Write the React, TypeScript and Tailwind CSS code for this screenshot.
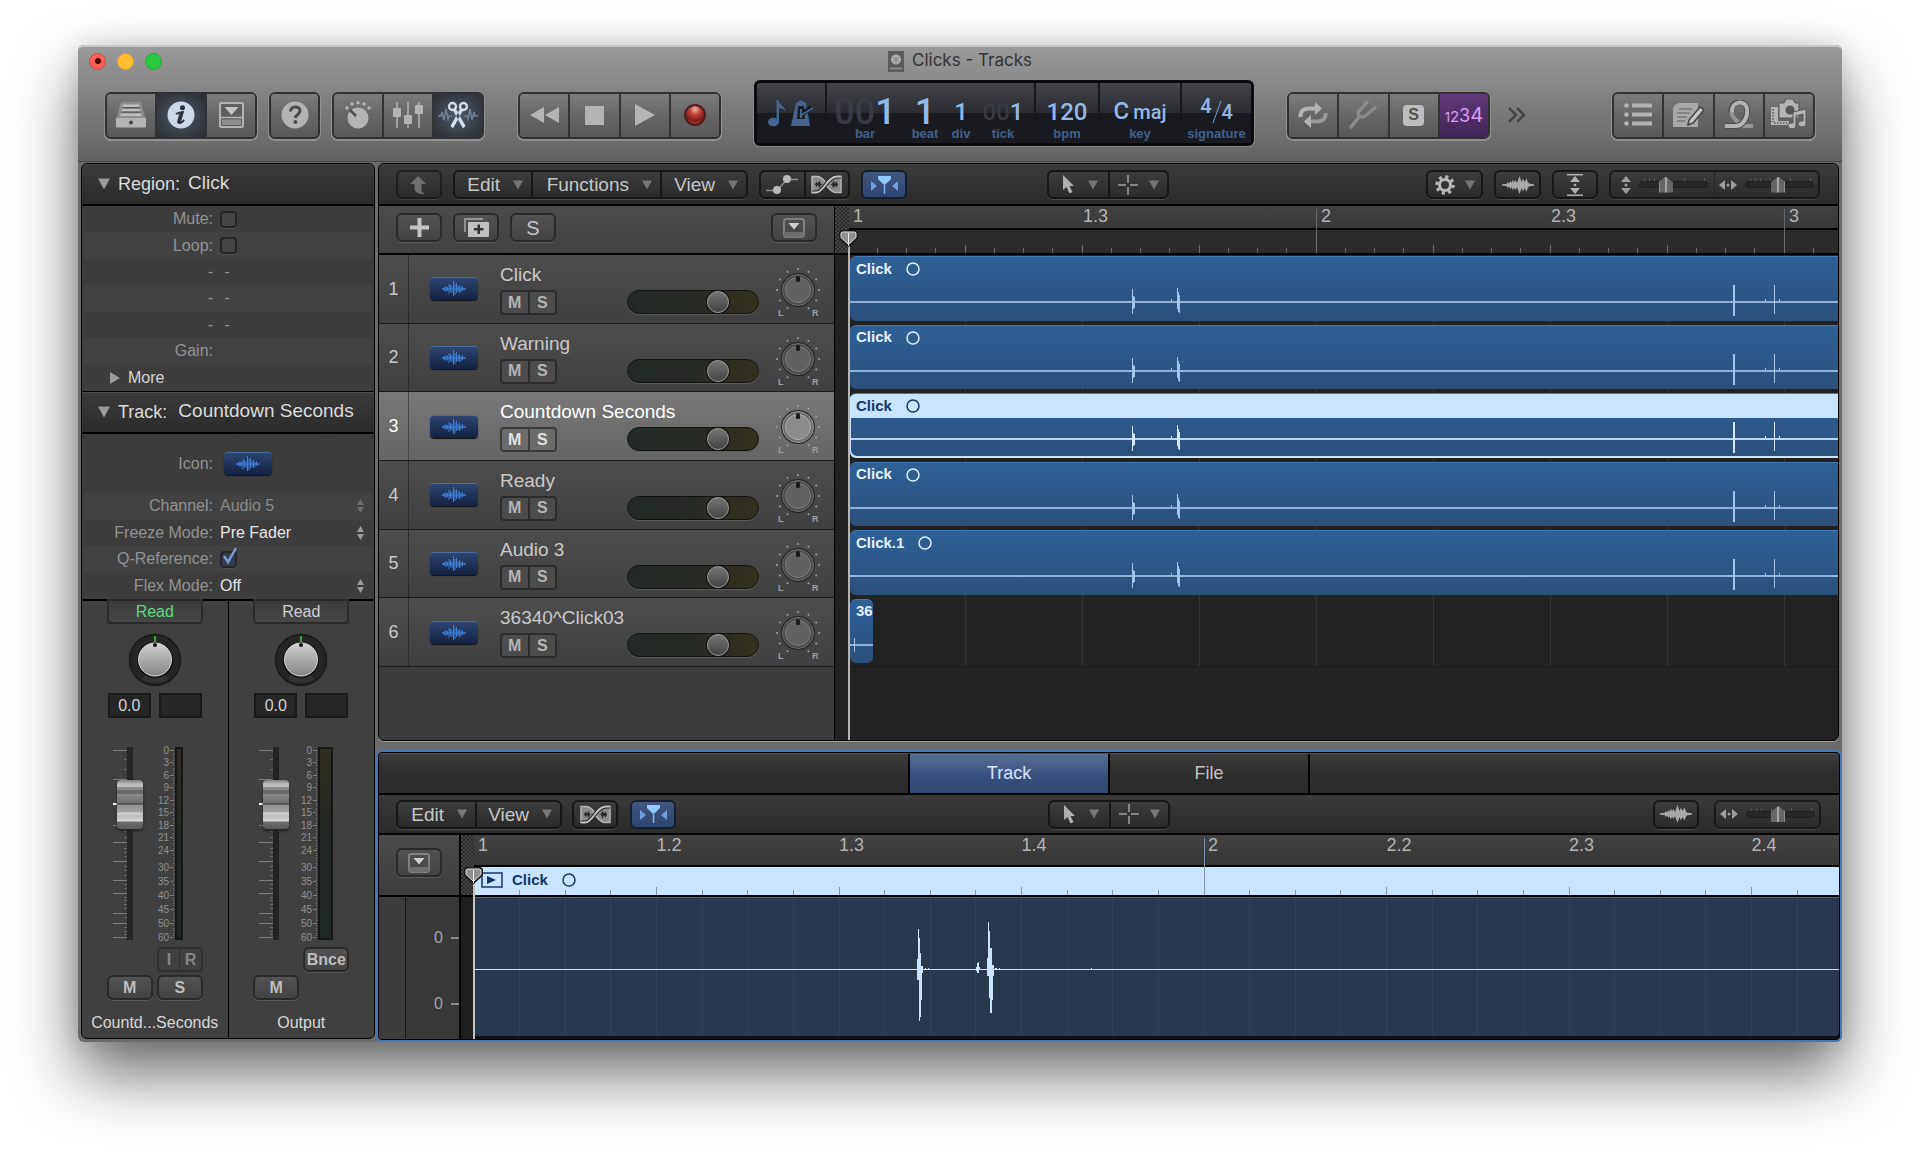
import type { ReactNode } from "react";
import clsx from "clsx";

const TRACKS = [
    { name: "Click", region: "Click" },
    { name: "Warning", region: "Click" },
    { name: "Countdown Seconds", region: "Click", selected: true },
    { name: "Ready", region: "Click" },
    { name: "Audio 3", region: "Click.1" },
    { name: "36340^Click03", region: "36", short: true },
];

const METER_SCALE: [string, number][] = [
    ["0", 3], ["3", 15], ["6", 28], ["9", 40], ["12", 53], ["15", 65], ["18", 78], ["21", 90],
    ["24", 103], ["30", 120], ["35", 134], ["40", 148], ["45", 162], ["50", 176], ["60", 190],
];
const FADER_LONG = [3, 32, 78, 95, 114, 133, 146, 166, 176, 190];
const FADER_SHORT = [12, 22, 41, 49, 64, 71, 84, 90, 101, 105, 109, 119, 123, 128, 137, 141, 150, 153, 157, 161, 170, 180, 184, 187];

const darkGroup = "flex h-[29px] shrink-0 rounded-md border-2 border-[#171717] bg-linear-to-b from-[#3c3c3c] to-[#2b2b2b] shadow-[0_1px_0_#484848]";
const greyButton = "flex items-center justify-center rounded-md border-2 border-[#2a2a2a] bg-linear-to-b from-[#525252] to-[#434343] shadow-[0_1px_0_#5a5a5a]";

/* ---------- icons ---------- */

function DownTriangle({ className = "text-[#777]" }: { className?: string }) {
    return (
        <svg width="10" height="10" viewBox="0 0 10 10" className={className} fill="currentColor">
            <path d="M0 0.5h10L5 9.5z" />
        </svg>
    );
}

function Stepper({ dim }: { dim?: boolean }) {
    return (
        <svg width="7" height="14" viewBox="0 0 7 14" className={dim ? "text-[#6d6d6d]" : "text-[#9a9a9a]"} fill="currentColor">
            <path d="M3.5 0 7 6H0zM0 8h7l-3.500 6z" />
        </svg>
    );
}

function RegionLoop() {
    return (
        <svg width="14" height="14" viewBox="0 0 14 14" fill="none" stroke="currentColor" strokeWidth="1.500" className="shrink-0">
            <circle cx="7" cy="7" r="6" />
        </svg>
    );
}

function WaveGlyph() {
    return (
        <svg width="32" height="18" viewBox="0 0 32 18" fill="currentColor">
            <path d="M0 8.300 4.500 8 6 6 7 7.500 8.500 5 9.500 7 11 3.500 12 6.500 13.500 4 15 7 17.500 0 19.500 6 21 2.500 22.500 6 24.500 2.500 26 6.500 27.500 7.800 32 8.300V9.700L27.500 10.200 26 11.500 24.500 15.500 22.500 12 21 15.500 19.500 12 17.500 18 15 11 13.500 14 12 11.500 11 14.500 9.500 11 8.500 13 7 10.500 6 12 4.500 10 0 9.700z" />
        </svg>
    );
}

function TrackIcon() {
    return (
        <span className="flex h-[23px] w-12 items-center justify-center rounded-sm border-t border-[#4b6c9f] bg-linear-to-b from-[#2c4570] to-[#142242] shadow-[0_1px_1px_#111]">
            <svg width="24" height="16" viewBox="0 0 24 16" stroke="#3f80d6" strokeWidth="1">
                <path d="M1 7v2M2.500 6v4M4 5v6M5.500 6v4M7 3v10M8.500 4v7M10 5v7M11.500 0v15M13 3v11M14.500 2v10M16 5v6M17.500 4v8M19 6v5M20.500 5v5M22 7v2M0 8h24" />
            </svg>
        </span>
    );
}

function FlexIcon() {
    return (
        <svg width="33" height="19" viewBox="0 0 33 19" fill="none">
            <path d="M2 1.500h5c5 0 7 4 9.500 7 2.500-3 5-7 9.500-7h5v16h-5c-4.500 0-7-4-9.500-7-2.500 3-4.500 7-9.500 7H2z" fill="#8b8b8b" stroke="#b5b5b5" strokeWidth="1.500" />
            <path d="M2 9.500h3l1.500-3 1.500 2 1.500-3 1.500 3.500 2 .5-2 .5-1.500 3-1.500-3-1.500 2-1.500-2.500zM31 9.500h-3l-1.500-3-1.500 2-1.500-3L22 9l-2 .5 2 .5 1.500 3.500 1.500-3 1.500 2 1.500-3z" fill="#2b2b2b" />
            <path d="M2 17.500h4c8 0 11-16 21-16h4" stroke="#2b2b2b" strokeWidth="4" />
            <path d="M2 17.500h4c8 0 11-16 21-16h4" stroke="#c4c4c4" strokeWidth="1.800" />
        </svg>
    );
}

function AutomationIcon() {
    return (
        <svg width="32" height="20" viewBox="0 0 32 20" fill="#b9b9b9" stroke="#8d8d8d" strokeWidth="1.500">
            <path d="M0 15.500h11L21 4.500h11" fill="none" />
            <circle cx="11" cy="15" r="4" stroke="none" />
            <circle cx="21" cy="4" r="4" stroke="none" />
        </svg>
    );
}

function CatchIcon() {
    return (
        <svg width="28" height="20" viewBox="0 0 28 20">
            <path d="M8 1h13v3l-5 5h-3L8 4z" fill="#93caff" />
            <path d="M14.500 8v11" stroke="#7fb5ee" strokeWidth="1.500" />
            <path d="M1 6v10l6-5zM28 6v10l-6-5z" fill="#6d9fde" />
        </svg>
    );
}

function DrawerIcon() {
    return (
        <svg width="22" height="22" viewBox="0 0 22 22">
            <rect x="1" y="2" width="20" height="18" rx="2" fill="none" stroke="#919191" strokeWidth="1.500" />
            <path d="M1 15h20v3.500a1.500 1.500 0 0 1-1.500 1.500h-17A1.500 1.500 0 0 1 1 18.500z" fill="#6e6e6e" />
            <path d="M5.500 6h11L11 12.500z" fill="#cfcfcf" />
        </svg>
    );
}

function PointerIcon() {
    return (
        <svg width="13" height="19" viewBox="0 0 13 19" fill="#b0b0b0">
            <path d="M1 0v15l3.500-3 3 6.500 3-1.500-3-6H12z" />
        </svg>
    );
}

function CrossIcon() {
    return (
        <svg width="20" height="20" viewBox="0 0 20 20" stroke="#a0a0a0" strokeWidth="1.500">
            <path d="M10 0v8M10 12v8M0 10h8M12 10h8" />
        </svg>
    );
}

/* ---------- top bar ---------- */

function ToolButton({ label, active, first, children }: { label: string; active?: "dark" | "purple"; first?: boolean; children: ReactNode }) {
    return (
        <button
            aria-label={label}
            className={clsx(
                "flex flex-1 items-center justify-center",
                !first && "border-l-2 border-[#333]",
                active === "dark" && "bg-radial from-[#515a66] to-[#2a2d33] text-[#d5e0ee]",
                active === "purple" && "bg-linear-to-b from-[#5e3a78] to-[#432457]",
                !active && "bg-linear-to-b from-[#7d7d7d] via-[#666] via-50% to-[#595959] text-[#b4b4b4]",
            )}
        >
            {children}
        </button>
    );
}

function ToolGroup({ width, children }: { width: string; children: ReactNode }) {
    return (
        <div className={clsx("flex h-[47px] shrink-0 overflow-hidden rounded-md border-2 border-[#303030] shadow-[0_1px_0_1px_#929292]", width)}>
            {children}
        </div>
    );
}

const lcdCell = "border-l-2 border-[#17181b] bg-linear-to-b from-transparent from-50% to-[#191a1f] to-50%";

function LcdField({ label, className, children }: { label: string; className?: string; children: ReactNode }) {
    return (
        <div className={clsx("flex flex-col items-center justify-end pb-0.5 leading-none", className)}>
            <div className="flex items-baseline font-[Roboto,sans-serif] text-[24px] leading-[30px] font-medium text-[#93b9e8]">{children}</div>
            <span className="text-[13px] leading-[14px] font-bold text-[#42618b]">{label}</span>
        </div>
    );
}

function Lcd() {
    return (
        <div className="flex h-[66px] w-[500px] shrink-0 overflow-hidden rounded-md border-3 border-[#0b0b0d] bg-linear-to-b from-[#44454a] via-[#2a2b30] via-50% to-[#24252b] shadow-[0_0_0_1px_#8c8c8c]">
            <div className="flex w-[68px] items-center justify-center gap-1 bg-linear-to-b from-transparent from-50% to-[#191a1f] to-50% text-[#44658f]">
                <svg width="18" height="28" viewBox="0 0 18 28" fill="currentColor">
                    <ellipse cx="5.500" cy="23" rx="5.500" ry="4.200" />
                    <path d="M8.500 1h2c0 5 7 6 7 12-1-3-4-4-6.500-4v14H8.500z" />
                </svg>
                <svg width="24" height="28" viewBox="0 0 24 28">
                    <path d="M6 4 11 1l5 3 4 23H1z" fill="currentColor" />
                    <path d="M7 20 8 7h6l1 13z" fill="#1a1c22" />
                    <path d="M11 16 22 8" stroke="#1a1c22" strokeWidth="5" />
                    <path d="M10 17 23 9M11 10v9" stroke="currentColor" strokeWidth="2" />
                </svg>
            </div>
            <div className={clsx("flex w-[209px]", lcdCell)}>
                <LcdField label="bar" className="w-[76px]">
                    <span className="text-[36px] text-[#363b44]">00</span>
                    <span className="text-[36px]">1</span>
                </LcdField>
                <LcdField label="beat" className="w-11">
                    <span className="text-[36px]">1</span>
                </LcdField>
                <LcdField label="div" className="w-7">1</LcdField>
                <LcdField label="tick" className="w-[56px]">
                    <span className="text-[#363b44]">00</span>
                    <span>1</span>
                </LcdField>
            </div>
            <LcdField label="bpm" className={clsx("w-16", lcdCell)}>120</LcdField>
            <LcdField label="key" className={clsx("w-[82px]", lcdCell)}>
                C<span className="ml-1 text-[20px]">maj</span>
            </LcdField>
            <LcdField label="signature" className={clsx("flex-1", lcdCell)}>
                <span className="self-start text-[20px] leading-[18px]">4</span>
                <svg width="10" height="24" viewBox="0 0 10 24" className="self-center">
                    <path d="M1 23 9 1" stroke="#7da3d3" />
                </svg>
                <span className="text-[20px]">4</span>
            </LcdField>
        </div>
    );
}

function TopBar() {
    return (
        <header className="rounded-t-md border-t-2 border-[#c6c8c7] bg-linear-to-b from-[#9a9a9a] to-[#626262]">
            <div className="relative flex h-7 items-center justify-center gap-2">
                <div className="absolute left-[11px] flex gap-[11px]">
                    <button aria-label="Close" className="flex size-[17px] items-center justify-center rounded-full border border-[#e0443e] bg-[#fe5f57]">
                        <span className="size-1.5 rounded-full bg-[#4d0000]" />
                    </button>
                    <button aria-label="Minimize" className="size-[17px] rounded-full border border-[#dfa023] bg-[#febc2e]" />
                    <button aria-label="Zoom" className="size-[17px] rounded-full border border-[#1dad2b] bg-[#28c940]" />
                </div>
                <svg width="16" height="21" viewBox="0 0 16 21">
                    <rect width="16" height="21" fill="#5c5c5c" />
                    <circle cx="8" cy="8.500" r="5" fill="#b5b5b5" />
                    <path d="M8 3.500v10M3.700 6l8.600 5M3.700 11l8.600-5" stroke="#777" strokeWidth=".8" />
                    <path d="M2 17.500h12" stroke="#a5a5a5" strokeDasharray="1.500 .6" strokeWidth="1.500" />
                </svg>
                <h1 className="font-[Inter,sans-serif] text-[17px] text-[#343434]">Clicks - Tracks</h1>
            </div>
            <div className="flex h-[87px] items-center border-b border-[#454545] px-[27px] pb-1.5">
                <ToolGroup width="w-[152px]">
                    <ToolButton first label="Library">
                        <svg width="30" height="26" viewBox="0 0 30 26" fill="currentColor">
                            <path d="M5 0h20l4 15H1z" fill="#8d8d8d" />
                            <path d="M7 2.500h16l.5 2.500h-17zM6 7h18l.6 2.500H5.400zM4.800 11.500h20.400l.6 2.500H4.200z" fill="#dadada" opacity=".65" />
                            <path d="M6.600 5.600h16.800M5.500 10.200h19" stroke="#555" strokeWidth="1.300" />
                            <rect y="15.500" width="30" height="10" rx="1" />
                            <circle cx="15" cy="20.500" r="2" fill="#444" />
                        </svg>
                    </ToolButton>
                    <ToolButton label="Inspector" active="dark">
                        <svg width="28" height="28" viewBox="0 0 28 28">
                            <circle cx="14" cy="14" r="13.500" fill="#cdd9e8" />
                            <circle cx="15.500" cy="6.800" r="2.500" fill="#2c3138" />
                            <path d="M9 12.500c2-1 5-1.800 7.500-2l-2.700 9.300c-.4 1.400.6 1.200 2.700-.8l.8.700c-2.500 3.300-7.300 4-6.600.7l1.900-6.900c.3-1-.7-.8-3.400-.3z" fill="#2c3138" stroke="#2c3138" />
                        </svg>
                    </ToolButton>
                    <ToolButton label="Toolbar">
                        <svg width="25" height="26" viewBox="0 0 25 26">
                            <rect x="1" y="1" width="23" height="24" rx="1.500" fill="#5e5e5e" stroke="currentColor" strokeWidth="2" />
                            <path d="M5.500 5h14l-7 8z" fill="#c4c4c4" />
                            <path d="M2 15.500h21" stroke="currentColor" strokeWidth="1.500" />
                            <rect x="3" y="17.500" width="19" height="5.500" fill="#8f8f8f" />
                        </svg>
                    </ToolButton>
                </ToolGroup>
                <div className="ml-3">
                    <ToolGroup width="w-[51px]">
                        <ToolButton first label="Quick Help">
                            <svg width="28" height="28" viewBox="0 0 28 28">
                                <circle cx="14" cy="14" r="13.500" fill="currentColor" />
                                <path d="M9.500 10.500c0-6 9.500-6 9.500-.5 0 3.500-4.500 3.500-4.500 7" fill="none" stroke="#4a4a4a" strokeWidth="3" />
                                <circle cx="14.400" cy="21" r="2" fill="#4a4a4a" />
                            </svg>
                        </ToolButton>
                    </ToolGroup>
                </div>
                <div className="ml-3">
                    <ToolGroup width="w-[152px]">
                        <ToolButton first label="Smart Controls">
                            <svg width="28" height="28" viewBox="0 0 28 28" fill="currentColor">
                                <circle cx="14" cy="17" r="10.500" />
                                <path d="m6 9 6 6" stroke="#4c4c4c" strokeWidth="2.500" />
                                <circle cx="3" cy="7" r="1.700" />
                                <circle cx="8" cy="3" r="1.700" />
                                <circle cx="14" cy="1.700" r="1.700" />
                                <circle cx="20" cy="3" r="1.700" />
                                <circle cx="25" cy="7" r="1.700" />
                            </svg>
                        </ToolButton>
                        <ToolButton label="Mixer">
                            <svg width="30" height="28" viewBox="0 0 30 28" fill="currentColor">
                                <path d="M3 1h2v26H3zM14 1h2v26h-2zM25 1h2v26h-2z" opacity=".75" />
                                <rect y="7" width="8" height="9" rx="1" />
                                <rect x="11" y="14" width="8" height="9" rx="1" />
                                <rect x="22" y="4" width="8" height="9" rx="1" />
                            </svg>
                        </ToolButton>
                        <ToolButton label="Editors" active="dark">
                            <svg width="40" height="28" viewBox="0 0 40 28" fill="none">
                                <path d="M0 15h3l1-4 2 8 2-11 2 10 1-3h3M40 15h-3l-1-4-2 8-2-11-2 10-1-3h-3" stroke="#6f8199" strokeWidth="1.500" />
                                <circle cx="14.500" cy="5.500" r="3.500" stroke="currentColor" strokeWidth="2.300" />
                                <circle cx="25.500" cy="5.500" r="3.500" stroke="currentColor" strokeWidth="2.300" />
                                <path d="M15 9.500 18 8l9.500 17-2.500 2.500zM25 9.500 22 8l-9.500 17 2.500 2.500z" fill="currentColor" />
                            </svg>
                        </ToolButton>
                    </ToolGroup>
                </div>
                <div className="ml-[34px]">
                    <ToolGroup width="w-[203px]">
                        <ToolButton first label="Rewind">
                            <svg width="29" height="18" viewBox="0 0 29 18" fill="currentColor">
                                <path d="M14 1v16L0 9zM29 1v16L15 9z" />
                            </svg>
                        </ToolButton>
                        <ToolButton label="Stop">
                            <span className="size-[19px] bg-[#b4b4b4]" />
                        </ToolButton>
                        <ToolButton label="Play">
                            <svg width="22" height="22" viewBox="0 0 22 22" fill="currentColor">
                                <path d="M1 0v22l20-11z" />
                            </svg>
                        </ToolButton>
                        <ToolButton label="Record">
                            <span className="size-[22px] rounded-full border-2 border-[#4b2020] bg-[radial-gradient(circle_at_50%_20%,#f5b5ad_0,#c04339_30%,#7c1d1b_65%,#c4463e_100%)]" />
                        </ToolButton>
                    </ToolGroup>
                </div>
                <div className="mb-1 ml-[33px]">
                    <Lcd />
                </div>
                <div className="ml-[33px]">
                    <ToolGroup width="w-[203px]">
                        <ToolButton first label="Cycle">
                            <svg width="30" height="26" viewBox="0 0 30 26" fill="none" stroke="currentColor" strokeWidth="4">
                                <path d="M2.500 15C2 8 7 6.500 11 6.500h7" />
                                <path d="M27.500 11c.5 7-4.500 8.500-8.500 8.500h-7" stroke="#999" />
                                <path d="M17 0v13l7-6.500zM13 13v13l-7-6.500z" fill="currentColor" stroke="none" />
                            </svg>
                        </ToolButton>
                        <ToolButton label="Tuner">
                            <svg width="28" height="30" viewBox="0 0 28 30" fill="none" stroke="#8b8b8b" strokeWidth="3.500">
                                <path d="M19 1 10 11c-1.500 2-.5 4 .5 5s3.500 2 5.500 0L27 7M1 28l10-12" />
                            </svg>
                        </ToolButton>
                        <ToolButton label="Solo">
                            <span className="flex size-[21px] items-center justify-center rounded-sm bg-[#bdbdbd] text-[16px] font-bold text-[#505050]">S</span>
                        </ToolButton>
                        <ToolButton label="Count In" active="purple">
                            <span className="flex items-baseline font-[Inter,sans-serif] text-[#dd9cf5]">
                                <span className="text-[13px]">1</span>
                                <span className="text-[15px]">2</span>
                                <span className="text-[18px]">3</span>
                                <span className="text-[20px]">4</span>
                            </span>
                        </ToolButton>
                    </ToolGroup>
                </div>
                <button aria-label="More controls" className="ml-[18px]">
                    <svg width="18" height="16" viewBox="0 0 18 16" fill="none" stroke="#444" strokeWidth="2.500">
                        <path d="m1 1 7 7-7 7M9 1l7 7-7 7" />
                    </svg>
                </button>
                <div className="ml-auto">
                    <ToolGroup width="w-[203px]">
                        <ToolButton first label="List Editors">
                            <svg width="28" height="24" viewBox="0 0 28 24" fill="currentColor">
                                <circle cx="2.500" cy="2.500" r="2.300" />
                                <circle cx="2.500" cy="11.500" r="2.300" />
                                <circle cx="2.500" cy="20.500" r="2.300" />
                                <path d="M8 .5h20v4H8zM8 9.500h20v4H8zM8 18.500h20v4H8z" />
                            </svg>
                        </ToolButton>
                        <ToolButton label="Note Pad">
                            <svg width="32" height="26" viewBox="0 0 32 26">
                                <path d="M7 1h19v24H1V9c0-5 2-7 6-8z" fill="#a8a8a8" />
                                <path d="M7 7h13M5 11h13M5 15h10M5 19h8" stroke="#777" strokeWidth="1.500" />
                                <path d="m16 23 1-5L28 5l4 3-11 13z" fill="#c4c4c4" stroke="#444" strokeWidth="1.500" />
                            </svg>
                        </ToolButton>
                        <ToolButton label="Loops">
                            <svg width="28" height="30" viewBox="0 0 28 30" fill="none">
                                <path d="M28 26h-9c-4 0-4-3-7-5-4-3-6-7-5-11C9 0 21 0 22 9" stroke="#959595" strokeWidth="4" />
                                <path d="M6.500 12C6 -1 21 0 22 9c1 9-4 16.500-11 17H0" stroke="#4c4c4c" strokeWidth="6" />
                                <path d="M7 12C6.500 0 21 0 22 9c1 9-4 16.500-11 17H0" stroke="currentColor" strokeWidth="4" />
                            </svg>
                        </ToolButton>
                        <ToolButton label="Browsers">
                            <svg width="37" height="32" viewBox="0 0 37 32" fill="currentColor">
                                <path d="M1 8h7v14h11v4H1z" />
                                <path d="M3 10v13M4 24h14" stroke="#555" strokeDasharray="1.500 1.500" strokeWidth="1.500" />
                                <path d="M9 4h5l2-4h7l2 4h4v15H9z" stroke="#555" />
                                <circle cx="20" cy="11" r="4.500" fill="#555" />
                                <path d="M23 13 36 10v15a4 3 0 1 1-3-3v-7l-7 2v10a4 3 0 1 1-3-3z" stroke="#555" />
                            </svg>
                        </ToolButton>
                    </ToolGroup>
                </div>
            </div>
        </header>
    );
}

/* ---------- inspector ---------- */

function SectionHead({ label, value, gap }: { label: string; value: string; gap: string }) {
    return (
        <button className={clsx("flex h-10 w-full items-center border-t border-[#4c4c4c] bg-linear-to-b from-[#3a3a3a] to-[#2b2b2b] pb-0.5 pl-4 text-[#dcdcdc]", gap)}>
            <span className="flex items-center gap-2 text-lg">
                <DownTriangle className="size-3 text-[#9a9a9a]" />
                {label}
            </span>
            <span className="text-[19px]">{value}</span>
        </button>
    );
}

function InspectorRow({ label, id, children, odd }: { label: string; id?: string; children?: ReactNode; odd?: boolean }) {
    return (
        <div className={clsx("flex items-center text-base", odd ? "bg-[#424242]" : "bg-[#3d3d3d]")}>
            <label htmlFor={id} className="w-[131px] text-right text-[#929292]">
                {label}
            </label>
            <div className="ml-[7px] flex min-w-0 flex-1 items-center pr-2.5">{children}</div>
        </div>
    );
}

function Tick({ id, checked }: { id: string; checked?: boolean }) {
    return (
        <span className="relative flex">
            <input
                id={id}
                type="checkbox"
                defaultChecked={checked}
                className="size-[17px] appearance-none rounded border-2 border-[#262626] bg-[#454545] shadow-[0_1px_0_#505050] checked:bg-[#323c4e]"
            />
            {checked && (
                <svg width="18" height="18" viewBox="0 0 18 18" className="pointer-events-none absolute -top-1 left-0" fill="none" stroke="#7f98d4" strokeWidth="2.500">
                    <path d="m4 9 4 6 8-14" />
                </svg>
            )}
        </span>
    );
}

function Picker({ id, value, dim }: { id: string; value: string; dim?: boolean }) {
    return (
        <>
            <select id={id} disabled={dim} className={clsx("min-w-0 flex-1 appearance-none bg-transparent opacity-100", dim ? "text-[#8a8a8a]" : "text-[#e6e6e6]")}>
                <option>{value}</option>
            </select>
            <Stepper dim={dim} />
        </>
    );
}

function PanKnob() {
    return (
        <svg width="54" height="54" viewBox="0 0 54 54" className="block">
            <defs>
                <linearGradient id="knobFace" x1="0" y1="0" x2="0" y2="1">
                    <stop offset="0" stopColor="#d0d0d0" />
                    <stop offset="1" stopColor="#858585" />
                </linearGradient>
            </defs>
            <circle cx="27" cy="27" r="25.500" fill="#252525" stroke="#1a1a1a" strokeWidth="1.500" />
            <path d="M14 46a24 24 0 0 0 26 0l-4-6a17 17 0 0 1-18 0z" fill="#333" />
            <circle cx="27" cy="27" r="18" fill="#111" />
            <circle cx="27" cy="26.500" r="16.500" fill="url(#knobFace)" stroke="#dcdcdc" strokeWidth="1" />
            <circle cx="27" cy="12" r="2" fill="#111" />
            <path d="M27 3v6" stroke="#35d435" strokeWidth="1.500" />
        </svg>
    );
}

function Fader({ label }: { label: string }) {
    return (
        <div className="relative h-[193px] w-[30px]">
            <svg width="15" height="193" stroke="#7d7d7d" shapeRendering="crispEdges">
                {FADER_LONG.map((y) => (
                    <path key={y} d={`M0 ${y}.5h14`} />
                ))}
                {FADER_SHORT.map((y) => (
                    <path key={y} d={`M11 ${y}.5h3`} stroke="#6a6a6a" />
                ))}
                <path d="M0 57h14" stroke="#fff" strokeWidth="2" />
            </svg>
            <input
                type="range"
                aria-label={label}
                defaultValue={77}
                className="absolute top-0 left-1 m-0 h-[193px] w-[26px] appearance-none bg-[linear-gradient(90deg,transparent_10px,#242424_10px,#242424_16px,transparent_16px)] [direction:rtl] [writing-mode:vertical-lr] [&::-webkit-slider-thumb]:h-[49px] [&::-webkit-slider-thumb]:w-[26px] [&::-webkit-slider-thumb]:appearance-none [&::-webkit-slider-thumb]:rounded-sm [&::-webkit-slider-thumb]:bg-[linear-gradient(180deg,#7c7c7c_0,#bcbcbc_4px,#bcbcbc_7px,#8a8a8a_7px,#8a8a8a_10px,#6a6a6a_10px,#6a6a6a_14px,#8a8a8a_14px,#6f6f6f_23px,#333_24px,#8f8f8f_25px,#a2a2a2_32px,#d6d6d6_33px,#bbb_36px,#d8d8d8_41px,#6c6c6c_42px,#5a5a5a_100%)] [&::-webkit-slider-thumb]:shadow-[0_2px_3px_#222]"
            />
        </div>
    );
}

function Meter({ wide }: { wide?: boolean }) {
    return (
        <div className="flex">
            <svg width="27" height="196" className="overflow-visible" fill="#919191">
                {METER_SCALE.map(([n, y]) => (
                    <text key={n} x="21" y={y + 4} textAnchor="end" fontSize="10">
                        {n}
                    </text>
                ))}
                <g stroke="#808080" shapeRendering="crispEdges">
                    {METER_SCALE.map(([n, y]) => (
                        <path key={n} d={`M22 ${y}.5h3`} />
                    ))}
                    <path d="M25.500 3v188" strokeDasharray="1 1.500" />
                </g>
            </svg>
            <div className={clsx("h-[193px] border-2 border-[#171717] bg-linear-to-b from-[#302d1e] via-[#232823] via-40% to-[#1f2725]", wide ? "w-[15px]" : "w-2")} />
        </div>
    );
}

function ChannelStrip({ name, green, output }: { name: string; green?: boolean; output?: boolean }) {
    const small = "h-[25px] w-[46px] text-base font-bold text-[#bdbdbd]";
    return (
        <section className="flex flex-1 flex-col items-center bg-[#404040]">
            <button className={clsx("-mt-0.5 h-[25px] w-24 rounded-b border-2 border-[#2a2a2a] bg-linear-to-b from-[#3c3c3c] to-[#474747] text-base leading-[20px]", green ? "text-[#5cd982]" : "text-[#d0d0d0]")}>
                Read
            </button>
            <div className="mt-[9px]">
                <PanKnob />
            </div>
            <div className="mt-1.5 flex w-[94px] justify-between">
                <output className="h-[25px] w-[43px] border-2 border-[#1a1a1a] bg-[#262626] text-center text-base leading-[21px] text-[#d4d4d4]">0.0</output>
                <output className="h-[25px] w-[43px] border-2 border-[#1a1a1a] bg-[#262626]" />
            </div>
            <div className={clsx("mt-[29px] flex h-[196px] w-24 justify-between pl-1.5", output ? "pr-4" : "pr-5")}>
                <Fader label={`${name} volume`} />
                <Meter wide={output} />
            </div>
            <div className="mt-1 flex h-[25px] w-24 justify-end">
                {output ? (
                    <button className={clsx(greyButton, small)}>Bnce</button>
                ) : (
                    <div className="flex w-[46px] rounded border-2 border-[#303030] text-base font-bold text-[#858585]">
                        <button className="flex-1 leading-[20px]">I</button>
                        <button className="flex-1 border-l border-[#303030] leading-[20px]">R</button>
                    </div>
                )}
            </div>
            <div className="mt-[3px] flex w-24 justify-between">
                <button className={clsx(greyButton, small)}>M</button>
                {!output && <button className={clsx(greyButton, small)}>S</button>}
            </div>
            <p className="mt-[11px] text-base text-[#d8d8d8]">{name}</p>
        </section>
    );
}

function Inspector() {
    return (
        <aside className="mb-[3px] ml-[3px] flex w-[294px] shrink-0 flex-col overflow-hidden rounded-md border border-black bg-[#404040]">
            <SectionHead label="Region:" value="Click" gap="gap-2" />
            <div className="grid h-[188px] grid-rows-7 border-t-2 border-b border-black">
                <InspectorRow label="Mute:" id="mute">
                    <Tick id="mute" />
                </InspectorRow>
                <InspectorRow label="Loop:" id="loop" odd>
                    <Tick id="loop" />
                </InspectorRow>
                <InspectorRow label="-">
                    <span className="text-[#929292]">&nbsp;-</span>
                </InspectorRow>
                <InspectorRow label="-" odd>
                    <span className="text-[#929292]">&nbsp;-</span>
                </InspectorRow>
                <InspectorRow label="-">
                    <span className="text-[#929292]">&nbsp;-</span>
                </InspectorRow>
                <InspectorRow label="Gain:" odd />
                <button className="flex items-center gap-2 bg-[#3d3d3d] pl-7 text-base text-[#d5d5d5]">
                    <svg width="10" height="12" viewBox="0 0 10 12" fill="#999">
                        <path d="M0 0v12l10-6z" />
                    </svg>
                    More
                </button>
            </div>
            <SectionHead label="Track:" value="Countdown Seconds" gap="gap-[11px]" />
            <div className="grid h-[169px] grid-rows-[59px_1fr_1fr_1fr_1fr] border-y-2 border-black">
                <InspectorRow label="Icon:">
                    <span className="ml-1">
                        <TrackIcon />
                    </span>
                </InspectorRow>
                <InspectorRow label="Channel:" id="channel" odd>
                    <Picker id="channel" value="Audio 5" dim />
                </InspectorRow>
                <InspectorRow label="Freeze Mode:" id="freeze">
                    <Picker id="freeze" value="Pre Fader" />
                </InspectorRow>
                <InspectorRow label="Q-Reference:" id="qref" odd>
                    <Tick id="qref" checked />
                </InspectorRow>
                <InspectorRow label="Flex Mode:" id="flex">
                    <Picker id="flex" value="Off" />
                </InspectorRow>
            </div>
            <div className="flex flex-1 gap-px bg-black">
                <ChannelStrip name="Countd...Seconds" green />
                <ChannelStrip name="Output" output />
            </div>
        </aside>
    );
}

/* ---------- shared toolbar parts ---------- */

function MenuButton({ label, first, width }: { label: string; first?: boolean; width: string }) {
    return (
        <button className={clsx("flex items-center justify-end gap-[13px] pr-2 text-[19px] leading-none text-[#c6c6c6]", width, !first && "border-l-2 border-[#171717]")}>
            {label}
            <DownTriangle />
        </button>
    );
}

function ToolPickers() {
    return (
        <div className={clsx(darkGroup, "w-[122px]")}>
            <button aria-label="Left-click tool" className="flex flex-1 items-center justify-end gap-[13px] pr-2.5">
                <PointerIcon />
                <DownTriangle />
            </button>
            <button aria-label="Command-click tool" className="flex flex-1 items-center justify-end gap-[11px] border-l-2 border-[#171717] pr-2">
                <CrossIcon />
                <DownTriangle />
            </button>
        </div>
    );
}

function ZoomSlider({ vertical, value }: { vertical?: boolean; value: number }) {
    return (
        <label className="flex flex-1 items-center justify-center gap-2">
            <svg width="18" height="18" viewBox="0 0 18 18" fill="#a9a9a9" className={vertical ? "-mr-1 rotate-90" : ""}>
                <path d="M0 9l6-5v10zM18 9l-6-5v10z" />
                <circle cx="9" cy="9" r="1.500" />
            </svg>
            <span className="relative flex h-[25px] w-[69px] items-center">
                <svg width="69" height="4" className="absolute top-1.5 left-0" stroke="#5a5a5a" shapeRendering="crispEdges">
                    <path d="M5.500 0v4M10.500 0v4M15.500 0v4M25.500 0v4M45.500 0v4M65.500 0v4" />
                </svg>
                <input
                    type="range"
                    aria-label={vertical ? "Vertical zoom" : "Horizontal zoom"}
                    defaultValue={value}
                    className="relative m-0 h-[7px] w-full appearance-none rounded-full border border-[#1c1c1c] bg-[#262626] [&::-webkit-slider-thumb]:h-4 [&::-webkit-slider-thumb]:w-3.5 [&::-webkit-slider-thumb]:appearance-none [&::-webkit-slider-thumb]:bg-[linear-gradient(90deg,#9a9a9a_1px,#6c6c6c_1px,#6c6c6c_6px,#b5b5b5_6px,#b5b5b5_8px,#6c6c6c_8px,#6c6c6c_13px,#9a9a9a_13px)] [&::-webkit-slider-thumb]:[clip-path:polygon(50%_0,100%_35%,100%_100%,0_100%,0_35%)]"
                />
            </span>
        </label>
    );
}

function PlayheadTop() {
    return (
        <svg width="19" height="17" viewBox="0 0 19 17" className="absolute top-0 -left-[9px]">
            <path d="M2.500 1h14l1.500 1.500V8l-8.500 8L1 8V2.500z" fill="#8f8f8f" stroke="#1c1c1c" strokeWidth="2" />
            <path d="M3.500 2h12l1.500 1v4.500l-7.500 7-7.500-7V3z" fill="none" stroke="#e0e0e0" />
            <path d="M9.500 3v13" stroke="#eee" />
        </svg>
    );
}

const hatch = "bg-[repeating-conic-gradient(#2a2a2a_0_25%,#454545_0_50%)] bg-[length:4px_4px]";

/* ---------- tracks area ---------- */

function TrackKnob({ selected }: { selected?: boolean }) {
    const dots = [-150, -120, -90, -60, -30, 0, 30, 60, 90, 120, 150];
    return (
        <svg width="48" height="52" viewBox="0 0 48 52" fontSize="9" fontWeight="bold" fill="#a0a0a0">
            {dots.map((a) => (
                <circle key={a} cx={24 + 21 * Math.sin((a * Math.PI) / 180)} cy={25 - 21 * Math.cos((a * Math.PI) / 180)} r="1" />
            ))}
            <circle cx="24" cy="25" r="17" fill="#252525" />
            <circle cx="24" cy="25" r="15.500" fill={selected ? "#6d6d6d" : "#4b4b4b"} stroke={selected ? "#9a9a9a" : "#6c6c6c"} strokeWidth="1" />
            <circle cx="24" cy="25" r="12.500" fill={selected ? "#8c8c8c" : "#616161"} stroke={selected ? "#adadad" : "#7d7d7d"} />
            <rect x="22" y="11" width="4" height="6" rx="1.500" fill="#1c1c1c" />
            <text x="4" y="51">L</text>
            <text x="38" y="51">R</text>
        </svg>
    );
}

function TrackHeader({ index, name, selected }: { index: number; name: string; selected?: boolean }) {
    return (
        <div
            className={clsx(
                "flex border-b border-[#1c1c1c] bg-linear-to-b",
                selected ? "from-[#787878] to-[#656565] text-white" : "from-[#4d4d4d] to-[#404040] text-[#c9c9c9]",
            )}
        >
            <span className={clsx("flex w-[30px] items-center justify-center border-r text-lg", selected ? "border-[#454545]" : "border-[#2a2a2a]")}>{index}</span>
            <div className="flex w-[91px] items-center pl-[21px]">
                <TrackIcon />
            </div>
            <div className="flex w-[127px] flex-col pt-2">
                <h2 className="text-[19px] leading-[23px] whitespace-nowrap">{name}</h2>
                <div className={clsx("mt-1 flex h-[25px] w-[57px] rounded border-2 text-base font-bold", selected ? "border-[#3c3c3c] bg-[#6b6b6b] text-[#e0e0e0]" : "border-[#2c2c2c] bg-[#4c4c4c] text-[#b4b4b4]")}>
                    <button className="flex-1 leading-[20px]">M</button>
                    <button className={clsx("flex-1 border-l-2 leading-[20px]", selected ? "border-[#3c3c3c]" : "border-[#2c2c2c]")}>S</button>
                </div>
            </div>
            <input
                type="range"
                aria-label={`${name} volume`}
                defaultValue={73}
                className="m-0 mt-[35px] h-6 w-[132px] appearance-none rounded-full border border-[#141414] bg-linear-to-r from-[#232a26] via-[#272a24] to-[#33301e] shadow-[0_1px_0_#5a5a5a] [&::-webkit-slider-thumb]:size-[22px] [&::-webkit-slider-thumb]:appearance-none [&::-webkit-slider-thumb]:rounded-full [&::-webkit-slider-thumb]:border [&::-webkit-slider-thumb]:border-[#999] [&::-webkit-slider-thumb]:bg-linear-to-b [&::-webkit-slider-thumb]:from-[#757575] [&::-webkit-slider-thumb]:to-[#444] [&::-webkit-slider-thumb]:shadow-[0_0_0_1px_#111]"
            />
            <div className="mt-2.5 ml-[15px]">
                <TrackKnob selected={selected} />
            </div>
        </div>
    );
}

function Region({ label, selected, short }: { label: string; selected?: boolean; short?: boolean }) {
    const ink = selected ? "#d3e8ff" : "#a3c4ea";
    return (
        <div className="pt-px pb-[3px] pl-px">
            <div
                className={clsx(
                    "relative h-full overflow-hidden border-t border-[#447ab9] bg-linear-to-b from-[#2f6095] to-[#2b507b]",
                    short ? "w-[23px] rounded-md" : "rounded-l-md",
                    selected && "shadow-[inset_1px_-2px_0_#c8e4ff]",
                )}
            >
                <div className={clsx("flex h-6 items-center gap-3.5 pl-1.5 text-[15px] font-bold", selected ? "bg-[#c8e4ff] text-[#10376b]" : "text-[#e4f0ff]")}>
                    <span>{label}</span>
                    {!short && <RegionLoop />}
                </div>
                <svg className="absolute top-0 left-0 h-full w-full" stroke={ink} shapeRendering="crispEdges">
                    <path d="M0 45h3000" strokeWidth="2" opacity=".85" />
                    {short ? (
                        <path d="M4.500 38v14" />
                    ) : (
                        <path d="M282.500 32v25M283.500 39v13M284.500 40v11M321 42v2M327.500 31v21M328.500 35v20M329.500 38v18M883.500 28v31M884.500 28v31M915 42v2M924.500 28v29M929 42v2" />
                    )}
                </svg>
            </div>
        </div>
    );
}

function Arrange() {
    return (
        <section className="mr-[3px] ml-0.5 flex flex-col overflow-hidden rounded-md border border-black bg-[#222] shadow-[0_1px_0_#a0a0a0]">
            <div className="grid h-10 grid-cols-[1fr_122px_1fr] items-center border-t border-[#4c4c4c] bg-linear-to-b from-[#3a3a3a] to-[#2b2b2b] pr-[18px] pl-[17px]">
                <div className="flex gap-[11px]">
                    <button aria-label="Up one level" className={clsx(darkGroup, "w-[46px] items-center justify-center opacity-70")}>
                        <svg width="18" height="18" viewBox="0 0 18 18" fill="#888">
                            <path d="M8 0 0 8h4.500v4c0 4 3 6 11 6-3-1-4-2-4-5V8H16z" />
                        </svg>
                    </button>
                    <div className={darkGroup}>
                        <MenuButton label="Edit" width="w-[76px]" first />
                        <MenuButton label="Functions" width="w-[129px]" />
                        <MenuButton label="View" width="w-[86px]" />
                    </div>
                    <div className={clsx(darkGroup, "w-[91px]")}>
                        <button aria-label="Show automation" className="flex flex-1 items-center justify-center">
                            <AutomationIcon />
                        </button>
                        <button aria-label="Show flex" className="flex flex-1 items-center justify-center border-l-2 border-[#171717]">
                            <FlexIcon />
                        </button>
                    </div>
                    <button aria-label="Catch playhead" className="flex h-[29px] w-[46px] items-center justify-center rounded-md border-2 border-[#171f2d] bg-linear-to-b from-[#41577f] to-[#2d456f]">
                        <CatchIcon />
                    </button>
                </div>
                <ToolPickers />
                <div className="flex justify-end gap-[11px]">
                    <button aria-label="Snap settings" className={clsx(darkGroup, "w-[57px] items-center justify-center gap-2.5")}>
                        <svg width="20" height="20" viewBox="-10 -10 20 20" fill="none" stroke="#b8b8b8">
                            <circle r="5.500" strokeWidth="3" />
                            <circle r="8" strokeWidth="3.500" strokeDasharray="3 3.283" />
                        </svg>
                        <DownTriangle />
                    </button>
                    <button aria-label="Waveform zoom" className={clsx(darkGroup, "w-[47px] items-center justify-center text-[#a9a9a9]")}>
                        <WaveGlyph />
                    </button>
                    <button aria-label="Vertical auto zoom" className={clsx(darkGroup, "w-[46px] items-center justify-center")}>
                        <svg width="16" height="22" viewBox="0 0 16 22" fill="#b0b0b0">
                            <path d="M0 0h16v1.500H0zM0 20.500h16V22H0zM8 2l5 6H3zM8 20l5-6H3z" />
                            <circle cx="8" cy="11" r="1.300" />
                        </svg>
                    </button>
                    <div className={clsx(darkGroup, "w-[211px] opacity-90")}>
                        <ZoomSlider vertical value={35} />
                        <div className="w-px bg-[#222]" />
                        <ZoomSlider value={48} />
                    </div>
                </div>
            </div>
            <div className="flex flex-1 border-t-2 border-black">
                <div className="flex w-[456px] shrink-0 flex-col border-r border-black bg-[#3d3d3d]">
                    <div className="flex h-[49px] items-start gap-[11px] border-b-2 border-black bg-linear-to-b from-[#4b4b4b] to-[#424242] px-[17px] pt-[7px]">
                        <button aria-label="Add track" className={clsx(greyButton, "h-[29px] w-[46px]")}>
                            <svg width="19" height="19" viewBox="0 0 19 19" fill="#c4c4c4">
                                <path d="M7.500 0h4v7.500H19v4h-7.500V19h-4v-7.500H0v-4h7.500z" />
                            </svg>
                        </button>
                        <button aria-label="Duplicate track" className={clsx(greyButton, "h-[29px] w-[46px]")}>
                            <svg width="25" height="19" viewBox="0 0 25 19">
                                <path d="M1 14V1h18" stroke="#989898" strokeWidth="1.800" fill="none" />
                                <rect x="4" y="4" width="21" height="15" rx="1" fill="#c0c0c0" />
                                <path d="M13.500 6.500h2.500V10h3.500v2.500H16V16h-2.500v-3.500H10V10h3.500z" fill="#333" />
                            </svg>
                        </button>
                        <button className={clsx(greyButton, "h-[29px] w-[46px] text-[20px] leading-none text-[#c4c4c4]")}>S</button>
                        <button aria-label="Track header options" className={clsx(greyButton, "ml-auto h-[29px] w-[46px]")}>
                            <DrawerIcon />
                        </button>
                    </div>
                    <div className="grid h-[412px] grid-rows-6">
                        {TRACKS.map((t, i) => (
                            <TrackHeader key={t.name} index={i + 1} name={t.name} selected={t.selected} />
                        ))}
                    </div>
                    <div className="min-h-[73px] flex-1" />
                </div>
                <div className={clsx("h-[49px] w-3.5 shrink-0 border-b-2 border-black", hatch)} />
                <div className="relative min-w-0 flex-1 bg-[#222]">
                    <div className="relative h-[49px] overflow-hidden border-b-2 border-black bg-[#2b2b2b]">
                        <div className="h-6 border-b-2 border-black bg-linear-to-b from-[#424242] to-[#383838]">
                            <div className="grid w-[1170px] grid-cols-5 text-lg leading-5 text-[#b4b4b4]">
                                <span className="pl-1">1</span>
                                <span>1.3</span>
                                <span className="pl-1">2</span>
                                <span>2.3</span>
                                <span className="pl-1">3</span>
                            </div>
                        </div>
                        <svg className="absolute inset-0 h-full w-full" stroke="#6a6a6a" shapeRendering="crispEdges">
                            {Array.from({ length: 60 }, (_, i) => i + 1).map((i) => (
                                <path key={i} d={`M${Math.floor(i * 29.25) - 1}.5 ${i % 16 === 0 ? 3 : i % 4 === 0 ? 39 : 42}V48`} />
                            ))}
                        </svg>
                    </div>
                    <div className="relative h-[412px]">
                        <svg className="absolute inset-0 h-full w-full" stroke="#343434" shapeRendering="crispEdges">
                            {Array.from({ length: 15 }, (_, i) => (
                                <path key={i} d={`M${(i + 1) * 117 - 1}.5 0V412`} />
                            ))}
                        </svg>
                        <div className="relative grid h-full grid-rows-6 border-b border-[#181818]">
                            {TRACKS.map((t) => (
                                <Region key={t.name} label={t.region} selected={t.selected} short={t.short} />
                            ))}
                        </div>
                    </div>
                    <div className="absolute top-6 bottom-0 left-0 w-0.5 -translate-x-px bg-[#b5b5b5]">
                        <PlayheadTop />
                    </div>
                </div>
            </div>
        </section>
    );
}

/* ---------- audio editor ---------- */

function Editor() {
    return (
        <section className="mt-[9px] flex flex-1 flex-col rounded-md border-2 border-[#4a76b4]">
            <div className="flex flex-1 flex-col overflow-hidden rounded border border-black bg-[#101010]">
                <div className="grid h-10 shrink-0 grid-cols-[1fr_202px_200px_1fr] border-t border-[#4c4c4c] bg-linear-to-b from-[#3b3b3b] via-[#2e2e2e] via-50% to-[#2b2b2b] text-lg leading-none" role="tablist">
                    <span />
                    <button role="tab" aria-selected="true" className="border-x-2 border-black bg-linear-to-b from-[#586f93] via-[#35507e] via-60% to-[#30496f] pb-0.5 text-[#d6e6ff]">
                        Track
                    </button>
                    <button role="tab" aria-selected="false" className="border-r-2 border-black pb-0.5 text-[#c4c4c4]">
                        File
                    </button>
                    <span />
                </div>
                <div className="grid h-[42px] shrink-0 grid-cols-[1fr_122px_1fr] items-center border-y-2 border-black bg-linear-to-b from-[#3a3a3a] to-[#2b2b2b] pr-[18px] pl-[17px]">
                    <div className="flex">
                        <div className={darkGroup}>
                            <MenuButton label="Edit" width="w-[77px]" first />
                            <MenuButton label="View" width="w-[85px]" />
                        </div>
                        <button aria-label="Show flex" className={clsx(darkGroup, "ml-[10px] w-[46px] items-center justify-center")}>
                            <FlexIcon />
                        </button>
                        <button aria-label="Catch playhead" className="ml-3 flex h-[29px] w-[46px] items-center justify-center rounded-md border-2 border-[#171f2d] bg-linear-to-b from-[#41577f] to-[#2d456f]">
                            <CatchIcon />
                        </button>
                    </div>
                    <ToolPickers />
                    <div className="flex justify-end gap-[15px]">
                        <button aria-label="Waveform zoom" className={clsx(darkGroup, "w-[46px] items-center justify-center text-[#a9a9a9]")}>
                            <WaveGlyph />
                        </button>
                        <div className={clsx(darkGroup, "w-[107px] opacity-90")}>
                            <ZoomSlider value={46} />
                        </div>
                    </div>
                </div>
                <div className="flex flex-1">
                    <div className="flex w-[82px] shrink-0 flex-col border-r-2 border-black">
                        <div className="flex h-[62px] items-start border-b-2 border-black bg-linear-to-b from-[#4b4b4b] to-[#3d3d3d] pt-[13px] pl-[17px]">
                            <button aria-label="Editor options" className={clsx(greyButton, "h-[29px] w-[46px]")}>
                                <DrawerIcon />
                            </button>
                        </div>
                        <div className="flex flex-1 bg-[#383838] text-base text-[#a5a5a5]">
                            <div className="w-[27px] border-r border-[#151515] bg-[#3d3d3d]" />
                            <div className="flex flex-1 flex-col items-end gap-[46px] pt-[31px]">
                                <span className="flex items-center gap-2 leading-5">
                                    0<span className="h-0.5 w-2 bg-[#8a8a8a]" />
                                </span>
                                <span className="flex items-center gap-2 leading-5">
                                    0<span className="h-0.5 w-2 bg-[#8a8a8a]" />
                                </span>
                            </div>
                        </div>
                    </div>
                    <div className="flex w-[13px] shrink-0 flex-col">
                        <div className={clsx("h-[62px] border-b-2 border-black", hatch)} />
                        <div className="flex-1 bg-[#1f1f1f]" />
                    </div>
                    <div className="relative flex min-w-0 flex-1 flex-col">
                        <div className="h-8 overflow-hidden border-b-2 border-black bg-linear-to-b from-[#424242] to-[#363636]">
                            <div className="grid w-[1460px] grid-cols-8 text-lg leading-[21px] text-[#b4b4b4]">
                                <span className="pl-1">1</span>
                                <span>1.2</span>
                                <span>1.3</span>
                                <span>1.4</span>
                                <span className="pl-1">2</span>
                                <span>2.2</span>
                                <span>2.3</span>
                                <span>2.4</span>
                            </div>
                        </div>
                        <div className="flex h-[30px] items-center border-b-2 border-black bg-[#c8e4ff] pb-0.5 pl-[7px] text-[15px] font-bold text-[#10376b]">
                            <svg width="22" height="16" viewBox="0 0 22 16">
                                <rect x="1" y="1" width="20" height="14" fill="none" stroke="currentColor" strokeWidth="1.500" />
                                <path d="M6 4v8l9-4z" fill="currentColor" />
                            </svg>
                            <span className="mr-3.5 ml-[9px]">Click</span>
                            <RegionLoop />
                        </div>
                        <svg className="pointer-events-none absolute top-0 left-0 h-[60px] w-full" stroke="#7c93ab" shapeRendering="crispEdges">
                            {Array.from({ length: 48 }, (_, i) => i + 1).map((i) => (
                                <path key={i} d={`M${Math.floor(i * 45.625)}.5 ${i % 16 === 0 ? 3 : i % 4 === 0 ? 52 : 55}V60`} />
                            ))}
                        </svg>
                        <div className="mb-[3px] flex-1 rounded-b-sm border-t border-[#4a6a80] bg-[#28394e]">
                            <svg className="block h-[138px] w-full" shapeRendering="crispEdges">
                                <g stroke="#2f4257">
                                    {Array.from({ length: 48 }, (_, i) => (
                                        <path key={i} d={`M${Math.floor((i + 1) * 45.625)}.5 0V138`} />
                                    ))}
                                </g>
                                <path d="M0 71.500h3000" stroke="#c8e0fa" />
                                <g fill="#c8e4ff">
                                    <path d="M444 31h1v9h1v15h1v13h2v7h-1v27h-1v17h-1v4h-1V82h-2V61h1zM451 70h1v1h2v-1h1v1h1v1h-5z" />
                                    <path d="M502 69h1v-4h1v-1h1v5h1v3h-1v3h-2v-2h-1z" />
                                    <path d="M514 24h1v9h1v17h2v17h2v11h-1v24h-1v13h-2v-15h-1V78h-2V60h1zM521 70h2v1h2v-1h1v2h-5zM617 70h1v1h-1z" />
                                </g>
                            </svg>
                        </div>
                        <div className="absolute top-8 bottom-0 left-0 w-0.5 -translate-x-px bg-[#c5c5c5]">
                            <PlayheadTop />
                        </div>
                    </div>
                </div>
            </div>
        </section>
    );
}

export default function App() {
    return (
        <main className="min-h-[1155px] bg-white px-[78px] pt-[45px] pb-28 font-['Liberation_Sans',Arial,sans-serif]">
            <div className="rounded-md bg-[#6b6b6b] shadow-[0_32px_64px_rgba(0,0,0,0.58),0_0_24px_rgba(0,0,0,0.12)]">
                <TopBar />
                <div className="flex pt-px">
                    <Inspector />
                    <div className="ml-px flex min-w-0 flex-1 flex-col">
                        <Arrange />
                        <Editor />
                    </div>
                </div>
            </div>
        </main>
    );
}
